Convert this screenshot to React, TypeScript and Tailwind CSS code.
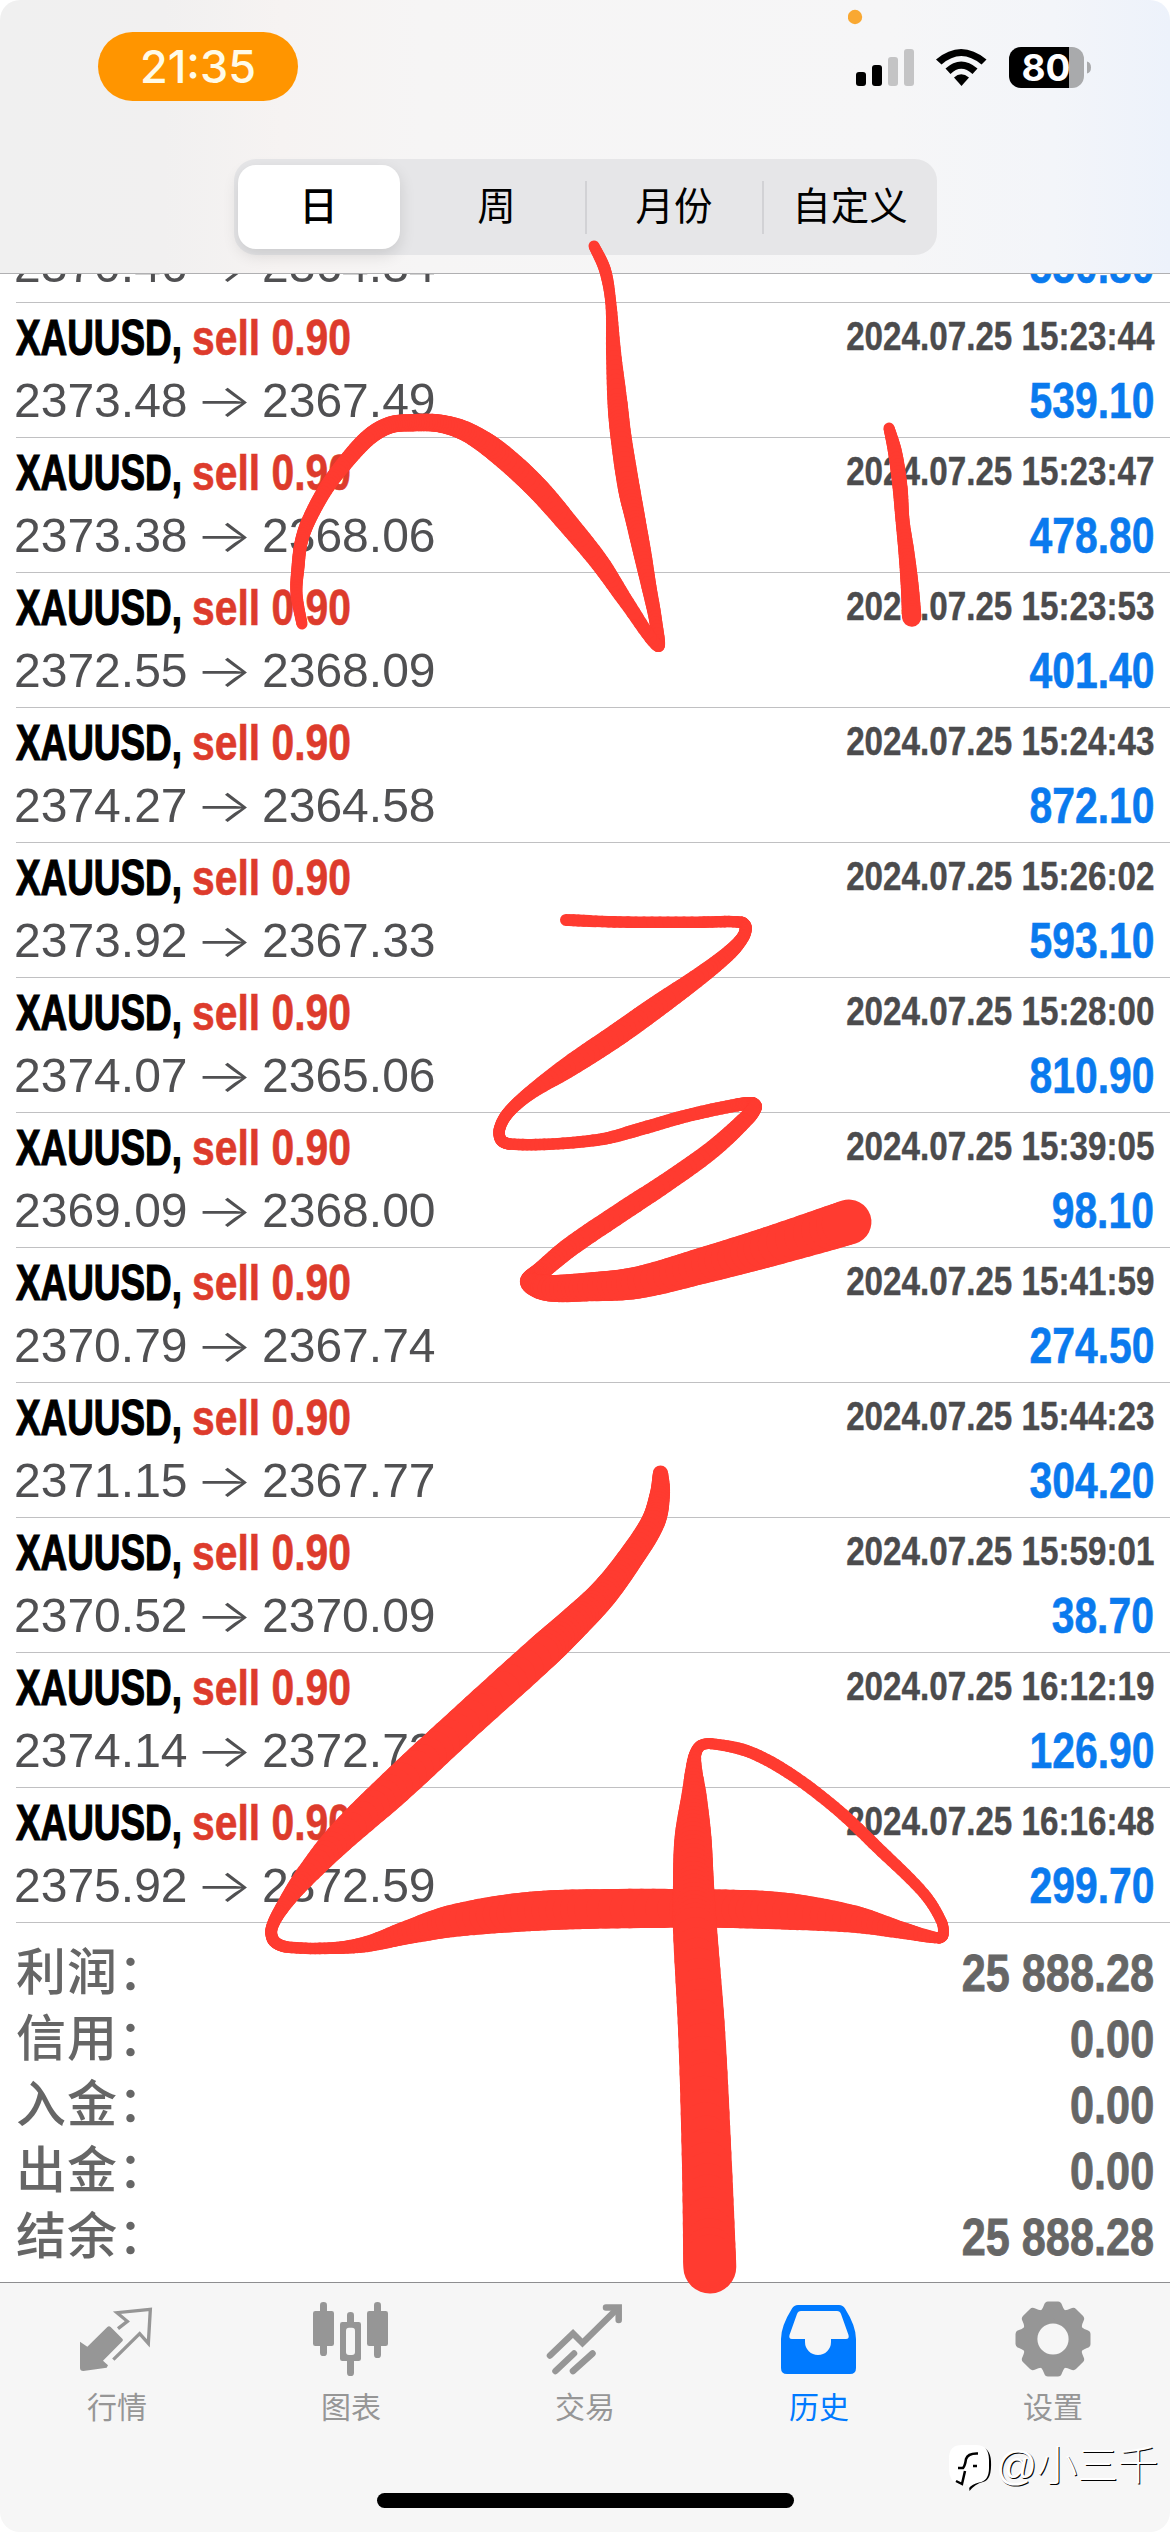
import React from "react";

const trades = [
  { open: "2370.46", close: "2364.34", time: "2024.07.25 15:23:41", profit: "550.80" },
  { open: "2373.48", close: "2367.49", time: "2024.07.25 15:23:44", profit: "539.10" },
  { open: "2373.38", close: "2368.06", time: "2024.07.25 15:23:47", profit: "478.80" },
  { open: "2372.55", close: "2368.09", time: "2024.07.25 15:23:53", profit: "401.40" },
  { open: "2374.27", close: "2364.58", time: "2024.07.25 15:24:43", profit: "872.10" },
  { open: "2373.92", close: "2367.33", time: "2024.07.25 15:26:02", profit: "593.10" },
  { open: "2374.07", close: "2365.06", time: "2024.07.25 15:28:00", profit: "810.90" },
  { open: "2369.09", close: "2368.00", time: "2024.07.25 15:39:05", profit: "98.10" },
  { open: "2370.79", close: "2367.74", time: "2024.07.25 15:41:59", profit: "274.50" },
  { open: "2371.15", close: "2367.77", time: "2024.07.25 15:44:23", profit: "304.20" },
  { open: "2370.52", close: "2370.09", time: "2024.07.25 15:59:01", profit: "38.70" },
  { open: "2374.14", close: "2372.73", time: "2024.07.25 16:12:19", profit: "126.90" },
  { open: "2375.92", close: "2372.59", time: "2024.07.25 16:16:48", profit: "299.70" },
];

const totals = [
  ["利润", "25 888.28"],
  ["信用", "0.00"],
  ["入金", "0.00"],
  ["出金", "0.00"],
  ["结余", "25 888.28"],
];

// x, y, radius
type Point = [number, number, number];

const strokes: Point[][] = [
  [
    [594, 246, 5.5], [605, 270, 6], [610.8, 303, 5.5], [613.6, 353, 7.5], [617.5, 403, 10],
    [621, 437, 10.5], [628.7, 487, 11], [635.5, 520, 10], [642.3, 553, 9], [649, 587, 7.5],
    [655.5, 620, 6.5], [658, 646, 6], [627, 603, 7.5], [600, 563, 9.5], [570, 526, 10.5],
    [536, 487, 11.5], [497.5, 452, 11.5], [467, 432, 10], [440, 423.5, 9], [413, 422.7, 8.7],
    [390, 425, 8.5], [369, 437, 8.5], [344, 464, 8], [325, 490, 7.5], [308, 522, 7],
    [301, 543, 6.5], [298, 567, 6.5], [296.5, 593, 6], [302, 624, 5.5],
  ],
  [
    [889, 428, 5.5], [895, 452, 7], [900, 487, 7.5], [902.5, 520, 7], [906.5, 553, 8],
    [909.8, 587, 9], [911.7, 617, 9.7],
  ],
  [
    [566, 920, 6], [620, 922, 5.8], [700, 922.2, 5.8], [741, 922.2, 5.8], [745.7, 927, 6], [743, 937, 6.3],
    [730, 952, 7.5], [700, 976, 9], [656.7, 1006.7, 11], [616.7, 1035, 11.5], [570, 1066, 10.5],
    [530, 1093, 7], [508, 1113, 6], [499.5, 1129, 5.8], [501, 1140, 5.8], [510, 1144, 5.8],
    [553, 1144, 5.8], [603, 1139, 6], [637, 1130, 6.5], [687, 1115.7, 6.5], [737, 1105, 6.5],
    [752, 1103.5, 6.5], [755, 1107, 7], [746.7, 1118, 8], [713, 1149, 9], [670, 1180, 9.5],
    [620, 1213, 10], [570, 1247, 10], [540, 1272, 9.5], [530, 1281.7, 10], [547, 1288, 13],
    [587, 1287, 14.3], [637, 1282.7, 16], [703, 1265.5, 18], [770, 1246.5, 20], [849, 1222, 22.5],
  ],
  [
    [660.5, 1473, 7.5], [660, 1493.6, 10], [653, 1522, 12], [629, 1560, 13], [603, 1594, 14.5],
    [574, 1623, 16.3], [541, 1653.500, 18], [462, 1725, 18], [395, 1787, 18], [340, 1838, 15],
    [304, 1878, 10.5], [282, 1908, 7], [271.5, 1929, 6], [274, 1941, 6], [287, 1947, 5.8],
    [334, 1948, 6], [367, 1944, 8], [405, 1933, 11.5], [452, 1921, 16], [523, 1912, 19.5],
    [594, 1909, 19.8], [712, 1908.6, 19.2], [783, 1911, 18.5], [853.5, 1919, 13.5], [901, 1930, 8.5],
    [938.5, 1938, 5.5], [943, 1935, 5.5], [941.7, 1922, 5.3], [924, 1893.6, 5.5], [877, 1847, 6],
    [839, 1811, 6], [792, 1775, 6], [749.7, 1752, 6], [712, 1743.8, 5.5], [700, 1746, 5.5],
    [694.5, 1758, 6.5], [694, 1797, 12.5], [693, 1840, 18.5], [693.5, 1886, 20.5], [695, 1929, 22],
    [701.7, 2033, 23.5], [707, 2167, 25], [709.8, 2267, 26.5],
  ],
];

const STEPS = 10;

// Catmull-Rom interpolation through the pen samples
const smooth = (points: Point[]): Point[] => {
  const out: Point[] = [];
  for (let i = 0; i < points.length - 1; i++) {
    const p0 = points[Math.max(i - 1, 0)];
    const p1 = points[i];
    const p2 = points[i + 1];
    const p3 = points[Math.min(i + 2, points.length - 1)];
    // keep uneven samples from overshooting
    const span = Math.hypot(p2[0] - p1[0], p2[1] - p1[1]);
    const before = Math.hypot(p1[0] - p0[0], p1[1] - p0[1]) || span;
    const after = Math.hypot(p3[0] - p2[0], p3[1] - p2[1]) || span;
    for (let s = 0; s < STEPS; s++) {
      const t = s / STEPS;
      const h1 = 2 * t ** 3 - 3 * t ** 2 + 1;
      const h2 = t ** 3 - 2 * t ** 2 + t;
      const h3 = -2 * t ** 3 + 3 * t ** 2;
      const h4 = t ** 3 - t ** 2;
      out.push(
        [0, 1, 2].map((k) => {
          const m1 = ((p2[k] - p0[k]) * span) / (span + before);
          const m2 = ((p3[k] - p1[k]) * span) / (span + after);
          return h1 * p1[k] + h2 * m1 + h3 * p2[k] + h4 * m2;
        }) as Point
      );
    }
  }
  out.push(points[points.length - 1]);
  return out;
};

const Doodle = () => {
  return (
    <svg
      className="absolute inset-0 pointer-events-none"
      width="1170"
      height="2532"
      viewBox="0 0 1170 2532"
      stroke="#ff3b30"
      strokeLinecap="round"
    >
      {strokes.map((stroke, n) => {
        const pts = smooth(stroke);
        return pts.slice(1).map((p, i) => (
          <line
            key={`${n}-${i}`}
            x1={pts[i][0]}
            y1={pts[i][1]}
            x2={p[0]}
            y2={p[1]}
            strokeWidth={pts[i][2] + p[2]}
          />
        ));
      })}
    </svg>
  );
};

const StatusBar = () => {
  return (
    <div className="flex justify-between items-start h-[159px] pl-[98px] pr-[79px]">
      <div className="mt-8 w-[200px] h-[69px] rounded-full bg-[#ff9500] flex items-center justify-center font-['Inter'] font-medium text-[45px] text-[#fffbe8]">
        21:35
      </div>
      <svg width="243" height="110" viewBox="848 10 243 110">
        <circle cx="855" cy="27" r="7.2" fill="#f9a832" />
        <rect x="856" y="82" width="10" height="14" rx="3" />
        <rect x="872" y="75" width="10" height="21" rx="3" />
        <rect x="888" y="67" width="10" height="29" rx="3" fill="#c4c4c5" />
        <rect x="904" y="59" width="10" height="37" rx="3" fill="#c4c4c5" />
        <path d="M936 69.5 Q961 48.5 986.500 69.500 L981.500 74.500 Q961 57.500 941.500 74.500Z" />
        <path d="M945.500 78.500 Q961 64.500 977.500 78.500 L972.500 84 Q961 73.500 950.500 84Z" />
        <path d="M954 87.500 Q961 81 969 87.500 L961.500 96Z" />
        <clipPath id="battery">
          <rect x="1009" y="57" width="75" height="41" rx="12" />
        </clipPath>
        <g clipPath="url(#battery)">
          <rect x="1009" y="57" width="60" height="41" />
          <rect x="1069" y="57" width="15" height="41" fill="#a9aaac" />
        </g>
        <path d="M1087 71.500 q4 1 4 6 t-4 6z" fill="#a9aaac" />
        <text
          x="1046"
          y="91"
          textAnchor="middle"
          fill="#fff"
          className="font-['Inter'] font-bold text-[37px]"
        >
          80
        </text>
      </svg>
    </div>
  );
};

const RangePicker = () => {
  return (
    <div className="mx-auto w-[703px] h-24 rounded-[22px] bg-[#e6e6e8] flex items-center text-[38.5px] text-black">
      <div className="w-[162px] h-[84px] ml-1 mr-[9px] rounded-[18px] bg-white shadow-[0_6px_16px_rgba(0,0,0,0.12)] flex items-center justify-center font-medium">
        日
      </div>
      <div className="w-[176px] text-center">周</div>
      <div className="w-0.5 h-[53px] bg-[#d2d2d5]"></div>
      <div className="w-[175px] text-center">月份</div>
      <div className="w-0.5 h-[53px] bg-[#d2d2d5]"></div>
      <div className="w-[173px] text-center">自定义</div>
    </div>
  );
};

const TradeRow = ({ trade }: { trade: (typeof trades)[number] }) => {
  return (
    <div className="ml-4 pr-4 pt-[3px] h-[135px] shrink-0 border-b border-[#c0c0c2] whitespace-nowrap">
      <div className="flex justify-between h-[62px] font-bold">
        <div className="flex text-[49.5px] leading-[63px]">
          <span className="w-[176px] origin-left scale-x-[0.745] text-black [-webkit-text-stroke:1.2px]">
            XAUUSD,
          </span>
          <span className="origin-left scale-x-[0.825] text-[#dd3b2c] [-webkit-text-stroke:0.6px]">
            sell 0.90
          </span>
        </div>
        <span className="origin-right scale-x-[0.83] text-[40px] leading-[61px] text-[#4b4b4d] [-webkit-text-stroke:0.4px]">
          {trade.time}
        </span>
      </div>
      <div className="flex justify-between h-16 text-[49px] leading-[64px]">
        <div className="flex text-[#505052]">
          <span className="w-[181px] -ml-0.5 origin-left scale-x-[0.98]">{trade.open}</span>
          <span className="w-[67px] origin-left scale-x-[1.32] font-['Inter'] font-light text-[46px]">→</span>
          <span className="origin-left scale-x-[0.98]">{trade.close}</span>
        </div>
        <span className="origin-right scale-x-[0.825] font-bold text-[49.5px] leading-[65px] text-[#0a7aee] [-webkit-text-stroke:0.6px]">
          {trade.profit}
        </span>
      </div>
    </div>
  );
};

const Totals = () => {
  return (
    <div className="pt-[17px] pl-4 pr-4 h-[359px] shrink-0 text-[#666] whitespace-nowrap">
      {totals.map(([label, value]) => (
        <div key={label} className="flex justify-between h-[66px] leading-[66px]">
          <span className="font-medium text-[50px]">
            <span className="tracking-[1px]">{label}</span>
            <span>：</span>
          </span>
          <span className="origin-right scale-x-[0.84] font-bold text-[51.5px] [-webkit-text-stroke:0.8px]">
            {value}
          </span>
        </div>
      ))}
    </div>
  );
};

const QuotesIcon = () => (
  <svg width="78" height="78" viewBox="54 30 234 234">
    <path
      d="M60 155 L82 170 L142 111 Q147 106 152 111 L187 146 Q191 150 187 154 L129 212 L144 226 L140 233 L70 243 Q60 243 60 234Z"
      fill="currentColor"
    />
    <path
      d="M174 116 L202 94 L171 68 L271 58 L265 160 L239 131 L160 209"
      fill="none"
      stroke="currentColor"
      strokeWidth="10"
    />
  </svg>
);

const ChartIcon = () => (
  <svg width="78" height="78" viewBox="756 30 234 234" fill="currentColor">
    <rect x="780" y="36" width="21" height="162" rx="10" />
    <rect x="759" y="63" width="63" height="105" rx="7" />
    <rect x="942" y="36" width="21" height="168" rx="10" />
    <rect x="921" y="63" width="63" height="105" rx="7" />
    <rect x="861" y="66" width="21" height="192" rx="10" />
    <rect x="840" y="96" width="63" height="117" rx="7" />
    <rect x="858" y="113" width="27" height="82" rx="9" fill="#f6f6f6" />
  </svg>
);

const TradeIcon = () => (
  <svg
    width="78"
    height="78"
    viewBox="546 2300 78 78"
    fill="none"
    stroke="currentColor"
    strokeWidth="6.500"
    strokeLinecap="round"
  >
    <path d="M550 2355.500 L573 2333.500 L582.500 2343 L617 2309" />
    <path d="M606 2307.500 H618.700 V2320" />
    <path d="M555.500 2371 L574 2353.500 M573 2371 L592.500 2353.500" />
  </svg>
);

const HistoryIcon = () => (
  <svg width="78" height="78" viewBox="-1 -5 78 78">
    <path
      fillRule="evenodd"
      fill="currentColor"
      d="M17 0 H58 Q62 0 64 3.500 Q75 21 75 34 V63 Q75 69 69 69 H6 Q0 69 0 63 V34 Q0 21 11 3.500 Q13 0 17 0Z M20 6 Q17 6 16 9 L8.500 30 Q7.500 34 11 34 H24 V37 A13 13 0 0 0 50 37 V34 H65 Q68.500 34 67.500 30 L60 9 Q59 6 56 6Z"
    />
  </svg>
);

const SettingsIcon = () => (
  <svg width="78" height="78" viewBox="-39 -39 78 78" fill="currentColor">
    <circle r="29.5" />
    {[0, 45, 90, 135].map((deg) => (
      <path
        key={deg}
        transform={`rotate(${deg})`}
        d="M-5 -37.500 H5 Q8 -37.500 9 -34 Q11 -28 15 -27 L15 27 Q11 28 9 34 Q8 37.500 5 37.500 H-5 Q-8 37.500 -9 34 Q-11 28 -15 27 L-15 -27 Q-11 -28 -9 -34 Q-8 -37.500 -5 -37.500Z"
      />
    ))}
    <circle r="15.6" fill="#f6f6f6" />
  </svg>
);

const tabs = [
  { name: "行情", icon: QuotesIcon },
  { name: "图表", icon: ChartIcon },
  { name: "交易", icon: TradeIcon },
  { name: "历史", icon: HistoryIcon, active: true },
  { name: "设置", icon: SettingsIcon },
];

const TabBar = () => {
  return (
    <div className="h-[250px] shrink-0 border-t border-[#8e8e90] bg-[#f6f6f6] rounded-b-[20px] flex flex-col items-center justify-between pb-6">
      <div className="grid grid-cols-5 w-full pt-[17px]">
        {tabs.map(({ name, icon: Icon, active }) => (
          <div
            key={name}
            className={`flex flex-col items-center ${active ? "text-[#007aff]" : "text-[#969696]"}`}
          >
            <Icon />
            <span className="text-[30px] leading-[60px]">{name}</span>
          </div>
        ))}
      </div>
      <div className="w-[417px] h-[15px] rounded-full bg-black"></div>
    </div>
  );
};

const Watermark = () => {
  return (
    <div className="absolute left-[948px] top-[2438px] flex items-center whitespace-nowrap">
      <svg width="46" height="56" viewBox="0 0 46 56">
        <path
          d="M12 9 H31 Q42 9 43 23 Q44 42 35 44 Q27 46 21.500 53 L21 48 Q34 42 30 30Z"
          fill="#000"
        />
        <path
          d="M14 7 H28 Q41 7 41 22 V30 Q41 43 31 44.500 Q24 46 21 50 L19 46 L12 47 Q1 44 1 32 V20 Q1 7 14 7Z"
          fill="#fff"
        />
        <path
          d="M10 30 H15 Q17 28 18 21 Q20 15 30 15.500 M25 28 H29 M17 33 L14 46 L8 43"
          fill="none"
          stroke="#000"
          strokeWidth="2.500"
        />
      </svg>
      <span className="ml-0.5 text-[40.5px] leading-[56px] font-light text-white [text-shadow:1px_1px_0_#000]">
        @小三千
      </span>
    </div>
  );
};

const App = () => {
  return (
    <div className="relative w-[1170px] h-[2532px] overflow-hidden bg-white flex flex-col font-['Liberation_Sans','Noto_Sans_CJK_SC',sans-serif]">
      <div className="h-[274px] shrink-0 rounded-t-[20px] border-b border-[#b0b0b2] bg-[linear-gradient(90deg,#f0f0f0_0%,#f1f0f0_14%,#f6f3f2_24%,#f6f5f5_36%,#f6f6f7_76%,#f3f5f9_90%,#edf2fb_100%)]">
        <StatusBar />
        <RangePicker />
      </div>
      <div className="h-[2008px] shrink-0 overflow-hidden">
        <div className="-mt-[106px] flex flex-col">
          {trades.map((trade) => (
            <TradeRow key={trade.time} trade={trade} />
          ))}
          <Totals />
        </div>
      </div>
      <TabBar />
      <Watermark />
      <Doodle />
    </div>
  );
};

export default App;
